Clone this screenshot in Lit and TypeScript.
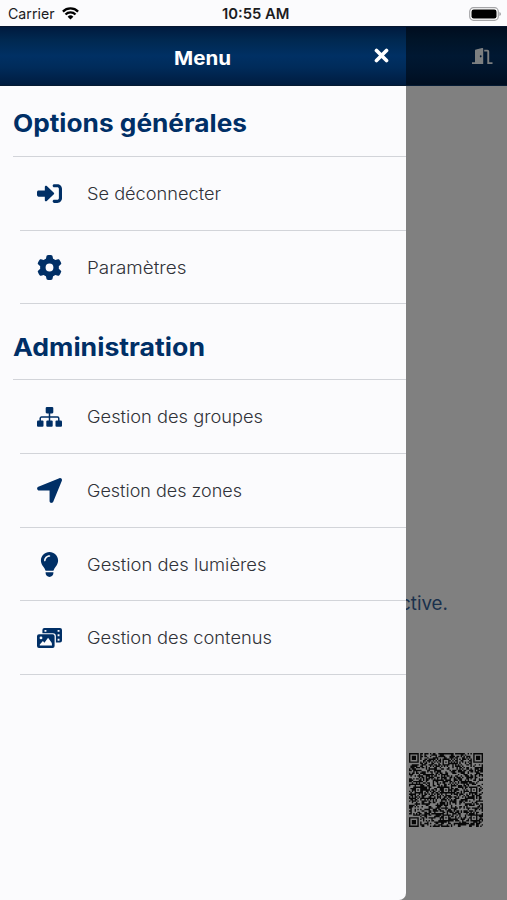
import { LitElement, html, svg, css } from "lit";
import { customElement, property } from "lit/decorators.js";

const icons: Record<string, any> = {
  logout: svg`<svg viewBox="0 0 512 512" width="25" height="25"><path d="M344.7 238.5l-144.1-136C193.7 95.97 183.4 94.17 174.6 97.95C165.8 101.8 160.1 110.4 160.1 120V192H32.02C14.33 192 0 206.3 0 224v64c0 17.68 14.33 32 32.02 32h128.1v72c0 9.578 5.707 18.25 14.51 22.05c8.803 3.781 19.03 1.984 26-4.594l144.1-136C354.3 264.4 354.3 247.6 344.7 238.5zM416 64h-64c-17.67 0-32 14.33-32 32s14.33 32 32 32h64c17.67 0 32 14.33 32 32v192c0 17.67-14.33 32-32 32h-64c-17.67 0-32 14.33-32 32s14.33 32 32 32h64c53.02 0 96-42.98 96-96V160C512 106.1 469 64 416 64z"/></svg>`,
  gear: svg`<svg viewBox="0 0 512 512" width="25" height="25"><path d="M495.9 166.6c3.2 8.7 .5 18.4-6.4 24.6l-43.3 39.4c1.1 8.3 1.7 16.8 1.7 25.4s-.6 17.1-1.7 25.4l43.3 39.4c6.9 6.2 9.6 15.9 6.4 24.6c-4.4 11.9-9.7 23.3-15.8 34.3l-4.7 8.1c-6.6 11-14 21.4-22.1 31.2c-5.9 7.2-15.7 9.6-24.5 6.8l-55.7-17.7c-13.4 10.3-28.2 18.9-44 25.4l-12.5 57.1c-2 9.1-9 16.3-18.2 17.8c-13.8 2.3-28 3.5-42.5 3.5s-28.7-1.2-42.5-3.5c-9.2-1.5-16.2-8.7-18.2-17.8l-12.5-57.1c-15.8-6.5-30.6-15.1-44-25.4L83.1 425.9c-8.8 2.8-18.6 .3-24.5-6.8c-8.1-9.8-15.5-20.2-22.1-31.2l-4.7-8.1c-6.1-11-11.4-22.4-15.8-34.3c-3.2-8.7-.5-18.4 6.4-24.6l43.3-39.4C64.6 273.1 64 264.6 64 256s.6-17.1 1.7-25.4L22.4 191.2c-6.9-6.2-9.6-15.9-6.4-24.6c4.4-11.9 9.7-23.3 15.8-34.3l4.7-8.1c6.6-11 14-21.4 22.1-31.2c5.9-7.2 15.7-9.6 24.5-6.8l55.7 17.7c13.4-10.3 28.2-18.9 44-25.4l12.5-57.1c2-9.1 9-16.3 18.2-17.8C227.3 1.2 241.5 0 256 0s28.7 1.2 42.5 3.5c9.2 1.5 16.2 8.7 18.2 17.8l12.5 57.1c15.8 6.5 30.6 15.1 44 25.4l55.7-17.7c8.8-2.8 18.6-.3 24.5 6.8c8.1 9.8 15.5 20.2 22.1 31.2l4.7 8.1c6.1 11 11.4 22.4 15.8 34.3zM256 336a80 80 0 1 0 0-160 80 80 0 1 0 0 160z"/></svg>`,
  groups: svg`<svg viewBox="0 0 25 20" width="25" height="20"><rect x="8.7" y="0" width="7.6" height="6.4" rx="1.1"/><rect x="0" y="13.5" width="6.5" height="6.3" rx="1.1"/><rect x="9.3" y="13.5" width="6.4" height="6.3" rx="1.1"/><rect x="18.5" y="13.5" width="6.5" height="6.3" rx="1.1"/><path d="M12.5 5v9M3.2 14v-2.6a1.3 1.3 0 0 1 1.3-1.3h16a1.3 1.3 0 0 1 1.3 1.3V14" fill="none" stroke="currentColor" stroke-width="1.5"/></svg>`,
  zones: svg`<svg viewBox="14 48 418 418" width="25" height="25"><path d="M429.6 92.1c4.9-11.9 2.1-25.6-7-34.7s-22.8-11.9-34.7-7l-352 144c-14.2 5.8-22.2 20.8-19.3 35.8s16.1 25.8 31.4 25.8H224V432c0 15.3 10.8 28.4 25.8 31.4s30-5.1 35.8-19.3l144-352z"/></svg>`,
  lights: svg`<svg viewBox="0 0 384 512" width="19" height="25"><path d="M272 384c9.6-31.9 29.5-59.1 49.2-86.2c5.2-7.1 10.4-14.2 15.4-21.4c19.8-28.5 31.4-63 31.4-100.3C368 78.8 289.2 0 192 0S16 78.8 16 176c0 37.3 11.6 71.9 31.4 100.3c5 7.2 10.2 14.3 15.4 21.4c19.8 27.1 39.7 54.4 49.2 86.2H272zM192 512c44.2 0 80-35.8 80-80V416H112v16c0 44.2 35.8 80 80 80zM112 176c0 8.8-7.2 16-16 16s-16-7.2-16-16c0-61.9 50.1-112 112-112c8.8 0 16 7.2 16 16s-7.2 16-16 16c-44.2 0-80 35.8-80 80z"/></svg>`,
  media: svg`<svg viewBox="0 0 25 20" width="25" height="20"><path fill-rule="evenodd" d="M7.4 0H23a2 2 0 0 1 2 2v10.6a2 2 0 0 1-2 2h-4.1V8.2a3 3 0 0 0-3-3H5.4V2a2 2 0 0 1 2-2zM7.5 1.9v1.8h1.9V1.9zM20.6 1.9v1.9h1.9V1.9zM20.6 6.3v1.9h1.9V6.3zM20.6 10.8v1.9h1.9v-1.9z"/><path fill-rule="evenodd" d="M2 6.3h13.6a2 2 0 0 1 2 2V18a2 2 0 0 1-2 2H2a2 2 0 0 1-2-2V8.3a2 2 0 0 1 2-2zM4 8.5a1.4 1.4 0 1 0 0 2.8 1.4 1.4 0 1 0 0-2.8zM2.8 17.5h12.2l-.2-2.6-3.7-5.2-3.7 5-1.5-1.6-3.1 3.5z"/></svg>`,
};

/** A line of text set to an exact advance width. */
@customElement("fitted-text")
class FittedText extends LitElement {
  @property() text = "";
  @property({ type: Number }) width = 100;
  @property({ type: Number }) size = 17;
  static styles = css`
    :host { display: block; flex: none; }
    svg { display: block; overflow: visible; }
    text { fill: currentColor; font-family: Inter, "Liberation Sans", sans-serif; }
  `;
  render() {
    return html`<svg width=${this.width} height=${this.size}>
      <text x="0" y=${this.size * 0.865} font-size=${this.size} textLength=${this.width} lengthAdjust="spacingAndGlyphs">${this.text}</text>
    </svg>`;
  }
}

function qrPath(): string {
  const n = 53;
  let seed = 90125;
  const rnd = () => {
    seed = (Math.imul(seed, 1664525) + 1013904223) >>> 0;
    return seed / 4294967296;
  };
  const grid = Array.from({ length: n }, () => Array.from({ length: n }, () => rnd() < 0.53));
  const rings = (cx: number, cy: number, reach: number, dark: (d: number) => boolean) => {
    for (let y = cy - reach; y <= cy + reach; y++)
      for (let x = cx - reach; x <= cx + reach; x++)
        if (grid[y] && x >= 0 && x < n) grid[y][x] = dark(Math.max(Math.abs(x - cx), Math.abs(y - cy)));
  };
  for (let i = 8; i < n - 8; i++) grid[6][i] = grid[i][6] = i % 2 === 0;
  for (const [x, y] of [[26, 6], [6, 26], [26, 26], [46, 26], [26, 46], [46, 46]]) rings(x, y, 2, (d) => d !== 1);
  for (const [x, y] of [[3, 3], [49, 3], [3, 49]]) rings(x, y, 4, (d) => d < 2 || d === 3);
  let d = "";
  grid.forEach((row, y) => row.forEach((on, x) => { if (on) d += `M${x} ${y}h1v1h-1z`; }));
  return d;
}

const sections = [
  { title: "Options générales", width: 234, items: [
    { icon: "logout", label: "Se déconnecter", width: 134 },
    { icon: "gear", label: "Paramètres", width: 99.5 } ] },
  { title: "Administration", width: 192, items: [
    { icon: "groups", label: "Gestion des groupes", width: 176 },
    { icon: "zones", label: "Gestion des zones", width: 155 },
    { icon: "lights", label: "Gestion des lumières", width: 179.5 },
    { icon: "media", label: "Gestion des contenus", width: 185 } ] },
];

@customElement("app-root")
class AppRoot extends LitElement {
  static styles = css`
    :host { display: flex; flex-direction: column; height: 900px; width: 507px; overflow: hidden; background: #fbfbfd; }
    svg { display: block; fill: currentColor; }
    .status { height: 26px; flex: none; display: grid; grid-template-columns: 1fr auto 1fr; align-items: center; padding: 1px 6px 0 8px; box-sizing: border-box; color: #1c1c1e; }
    .carrier { display: flex; align-items: center; gap: 7px; }
    .carrier svg { color: #000; }
    .time { font-weight: 600; margin-left: 2px; }
    .battery { justify-self: end; }
    .stage { flex: 1; display: flex; background: #808080; }
    .bar { height: 60px; flex: none; box-sizing: border-box; border-top: 1px solid #061630; border-bottom: 1px solid #061b33;
      background: linear-gradient(#001a3e 0%, #002850 22%, #003064 50%, #002b5a 70%, #001c40 100%); color: #fff; display: flex; align-items: center; }
    .drawer { width: 406px; flex: none; display: flex; flex-direction: column; background: #fbfbfd; border-bottom-right-radius: 7px; overflow: hidden; position: relative; z-index: 1; }
    .drawer .bar { display: grid; grid-template-columns: 1fr auto 1fr; padding: 3px 17px 0 16px; }
    .close { justify-self: end; margin-top: -4px; }
    .menu-title { font-weight: 700; margin-top: 1px; }
    .heading { height: 71px; box-sizing: border-box; padding-top: 25px; margin-left: 13px; border-bottom: 1px solid #d2d4d9; color: #002f66; font-weight: 700; }
    .section + .section .heading { height: 76px; padding-top: 31px; }
    .item { height: 73.7px; box-sizing: border-box; margin-left: 20px; padding-left: 17px; border-bottom: 1px solid #d2d4d9; display: flex; align-items: center; color: #303238; font-weight: 350; }
    .item fitted-text { margin-left: -0.5px; }
    .icon { width: 25px; margin-right: 25px; display: flex; justify-content: center; color: #002f66; }
    .page { flex: 1; display: flex; flex-direction: column; align-items: flex-start; }
    .page .bar { width: 100%; justify-content: flex-end; padding-right: 14px; color: #7c7f80;
      background: linear-gradient(#000d1f 0%, #001428 22%, #001832 50%, #00152d 70%, #000e20 100%); }
    .blurb { margin: 508px 0 0 -6px; color: #1a304c; }
    .qr { margin: 140px 0 0 3px; color: #080808; }
  `;

  render() {
    return html`
      <div class="status">
        <div class="carrier">
          <fitted-text text="Carrier" .width=${46.5} .size=${14.5}></fitted-text>
          <svg width="17" height="13" viewBox="0 0 17 13"><g fill="none" stroke="currentColor" stroke-width="2.3"><path d="M.9 4.6a10.8 10.8 0 0 1 15.2 0"/><path d="M3.5 7.5a7 7 0 0 1 10 0"/></g><path d="M8.5 12.5L5.6 9.7a4.2 4.2 0 0 1 5.8 0z"/></svg>
        </div>
        <fitted-text class="time" text="10:55 AM" .width=${67.5} .size=${14.8}></fitted-text>
        <svg class="battery" width="32" height="14" viewBox="0 0 32 14"><rect x=".7" y=".7" width="28.6" height="12.6" rx="3.8" fill="#fff" stroke="#a5a5a8" stroke-width="1.2"/><rect x="2.5" y="2.5" width="25" height="9" rx="2.2" fill="#000"/><path d="M30.5 5v4a2.2 2.2 0 0 0 0-4z" fill="#88888c"/></svg>
      </div>
      <div class="stage">
        <div class="drawer">
          <div class="bar">
            <span></span>
            <fitted-text class="menu-title" text="Menu" .width=${57} .size=${19}></fitted-text>
            <svg class="close" width="15" height="15" viewBox="0 0 15 15"><path d="M2.5 2.5l10 10M12.5 2.5l-10 10" fill="none" stroke="#fff" stroke-width="3.7" stroke-linecap="round"/></svg>
          </div>
          ${sections.map((s) => html`<div class="section">
            <div class="heading"><fitted-text .text=${s.title} .width=${s.width} .size=${24.5}></fitted-text></div>
            ${s.items.map((i) => html`<div class="item">
              <div class="icon">${icons[i.icon]}</div>
              <fitted-text .text=${i.label} .width=${i.width} .size=${16.8}></fitted-text>
            </div>`)}
          </div>`)}
        </div>
        <div class="page">
          <div class="bar">
            <svg width="21" height="17" viewBox="0 0 21 17"><path fill-rule="evenodd" d="M0 14.3h3V2.6Q3 1.7 4 1.5L10 0q1.2-.2 1.2.9V16H0zM8.7 7.2a.9 1.1 0 1 0 0 2.2.9 1.1 0 1 0 0-2.2z"/><path d="M12.2 1.7h3.2q1.8 0 1.8 1.8v10.8H20.5V16h-5.2V3.5h-3.1z"/></svg>
          </div>
          <fitted-text class="blurb" text="ctive." .width=${48} .size=${18.6}></fitted-text>
          <svg class="qr" width="74" height="74" viewBox="0 0 53 53"><path d=${qrPath()}/></svg>
        </div>
      </div>`;
  }
}
